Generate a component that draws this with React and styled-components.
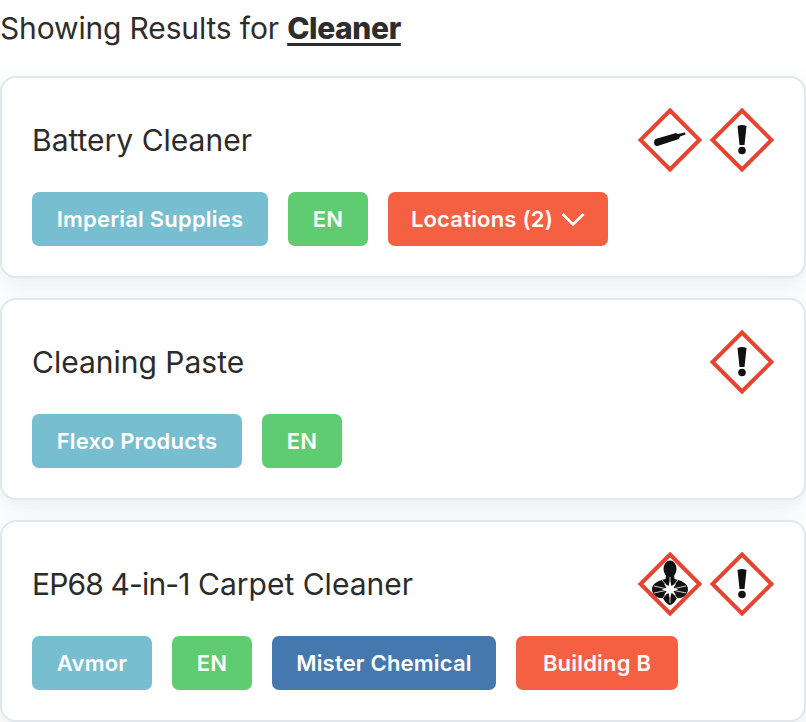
import React from 'react'
import styled, { createGlobalStyle } from 'styled-components'

const GlobalStyle = createGlobalStyle`
  html, body {
    margin: 0;
    padding: 0;
    background: #fff;
  }
  body {
    font-family: Inter, Lato, sans-serif;
    color: #2b2b2b;
  }
`

const Page = styled.div`
  width: 806px;
  height: 722px;
  overflow: hidden;
`

const Heading = styled.div`
  height: 76px;
  font-size: 30px;
  line-height: 56px;
  letter-spacing: -0.15px;
  color: #2d2d2d;
`

const Query = styled.span`
  font-weight: 800;
  letter-spacing: -0.4px;
  text-decoration: underline;
  text-decoration-thickness: 3px;
  text-underline-offset: 4px;
`

const List = styled.div`
  display: flex;
  flex-direction: column;
  gap: 20px;
`

const Card = styled.div`
  box-sizing: border-box;
  height: 202px;
  padding: 30px 30px 30px;
  background: #fff;
  border: 2px solid #e1e7ea;
  border-radius: 16px;
  box-shadow: 0 6px 20px rgba(110, 150, 170, 0.18);
`

const TopRow = styled.div`
  display: flex;
  justify-content: space-between;
  align-items: center;
  height: 64px;
`

const Name = styled.div`
  font-size: 30px;
  color: #2b2b2b;
`

// digits and hyphens run wider in this font than in the reference
const Tight = styled.span`
  letter-spacing: -0.85px;
`

const Hazards = styled.div`
  display: flex;
  gap: 8px;
`

const Tags = styled.div`
  display: flex;
  gap: 20px;
  margin-top: 20px;
`

const Tag = styled.div`
  box-sizing: border-box;
  display: flex;
  align-items: center;
  justify-content: center;
  gap: 8px;
  width: ${(props) => props.$width}px;
  height: 54px;
  padding-bottom: 1px;
  border-radius: 7px;
  background: ${(props) => props.$color};
  color: #fff;
  font-size: 22px;
  font-weight: 600;
  letter-spacing: 0.2px;
`

const colors = {
  supplier: '#78bed1',
  lang: '#60cc71',
  maker: '#4678b0',
  location: '#f56043',
}

const Diamond = ({ children }) => (
  <svg width="64" height="64" viewBox="0 0 64 64">
    <path d="M32 2.500 L61.500 32 L32 61.500 L2.500 32 Z" fill="#fff" stroke="#e8432f" strokeWidth="4" />
    {children}
  </svg>
)

const Exclamation = () => (
  <Diamond>
    <path d="M27.500 18 Q32 16 36.500 18 L34.500 37 L29.500 37 Z" fill="#111" />
    <circle cx="32" cy="42.500" r="3.800" fill="#111" />
  </Diamond>
)

const GasCylinder = () => (
  <Diamond>
    <path
      d="M17.500 31 L38 25 L40 26 L47 24.500 L47.500 26.500 L42 28.500 L41 31 L19.500 38 Q16.500 38.500 16 35 Q16 32 17.500 31 Z"
      fill="#111"
    />
  </Diamond>
)

const HealthHazard = () => (
  <Diamond>
    <ellipse cx="32" cy="17" rx="6.500" ry="8.500" fill="#111" />
    <path
      d="M28 22 L36 22 L36.500 27 C42 28 50 31 50 37 C50 43 44 47 39 46 C37 50 34 53 32 53 C30 53 27 50 25 46 C20 47 14 43 14 37 C14 31 22 28 27.500 27 Z"
      fill="#111"
    />
    <path
      d="M32 29 L33.500 34 L38 31.500 L35.500 36 L40.500 37.500 L35.500 39 L38 43.500 L33.500 41 L32 46 L30.500 41 L26 43.500 L28.500 39 L23.500 37.500 L28.500 36 L26 31.500 L30.500 34 Z"
      fill="#fff"
    />
    <path d="M32 25 V51 M16 41 L48 34 M16 34 L48 41 M24 47 L40 28 M24 28 L40 47" stroke="#fff" strokeWidth="0.800" />
  </Diamond>
)

const Chevron = () => (
  <svg width="24" height="24" viewBox="0 0 24 24" fill="none" stroke="#fff" strokeWidth="2.600">
    <path d="M1.500 7 L12 17.500 L22.500 7" />
  </svg>
)

const App = () => (
  <Page>
    <GlobalStyle />
    <Heading>
      Showing Results for <Query>Cleaner</Query>
    </Heading>
    <List>
      <Card>
        <TopRow>
          <Name>Battery Cleaner</Name>
          <Hazards>
            <GasCylinder />
            <Exclamation />
          </Hazards>
        </TopRow>
        <Tags>
          <Tag $color={colors.supplier} $width={236}>Imperial Supplies</Tag>
          <Tag $color={colors.lang} $width={80}>EN</Tag>
          <Tag $color={colors.location} $width={220}>
            Locations (2) <Chevron />
          </Tag>
        </Tags>
      </Card>
      <Card>
        <TopRow>
          <Name>Cleaning Paste</Name>
          <Hazards>
            <Exclamation />
          </Hazards>
        </TopRow>
        <Tags>
          <Tag $color={colors.supplier} $width={210}>Flexo Products</Tag>
          <Tag $color={colors.lang} $width={80}>EN</Tag>
        </Tags>
      </Card>
      <Card>
        <TopRow>
          <Name><Tight>EP68 4-in-1</Tight> Carpet Cleaner</Name>
          <Hazards>
            <HealthHazard />
            <Exclamation />
          </Hazards>
        </TopRow>
        <Tags>
          <Tag $color={colors.supplier} $width={120}>Avmor</Tag>
          <Tag $color={colors.lang} $width={80}>EN</Tag>
          <Tag $color={colors.maker} $width={224}>Mister Chemical</Tag>
          <Tag $color={colors.location} $width={162}>Building B</Tag>
        </Tags>
      </Card>
    </List>
  </Page>
)

export default App
